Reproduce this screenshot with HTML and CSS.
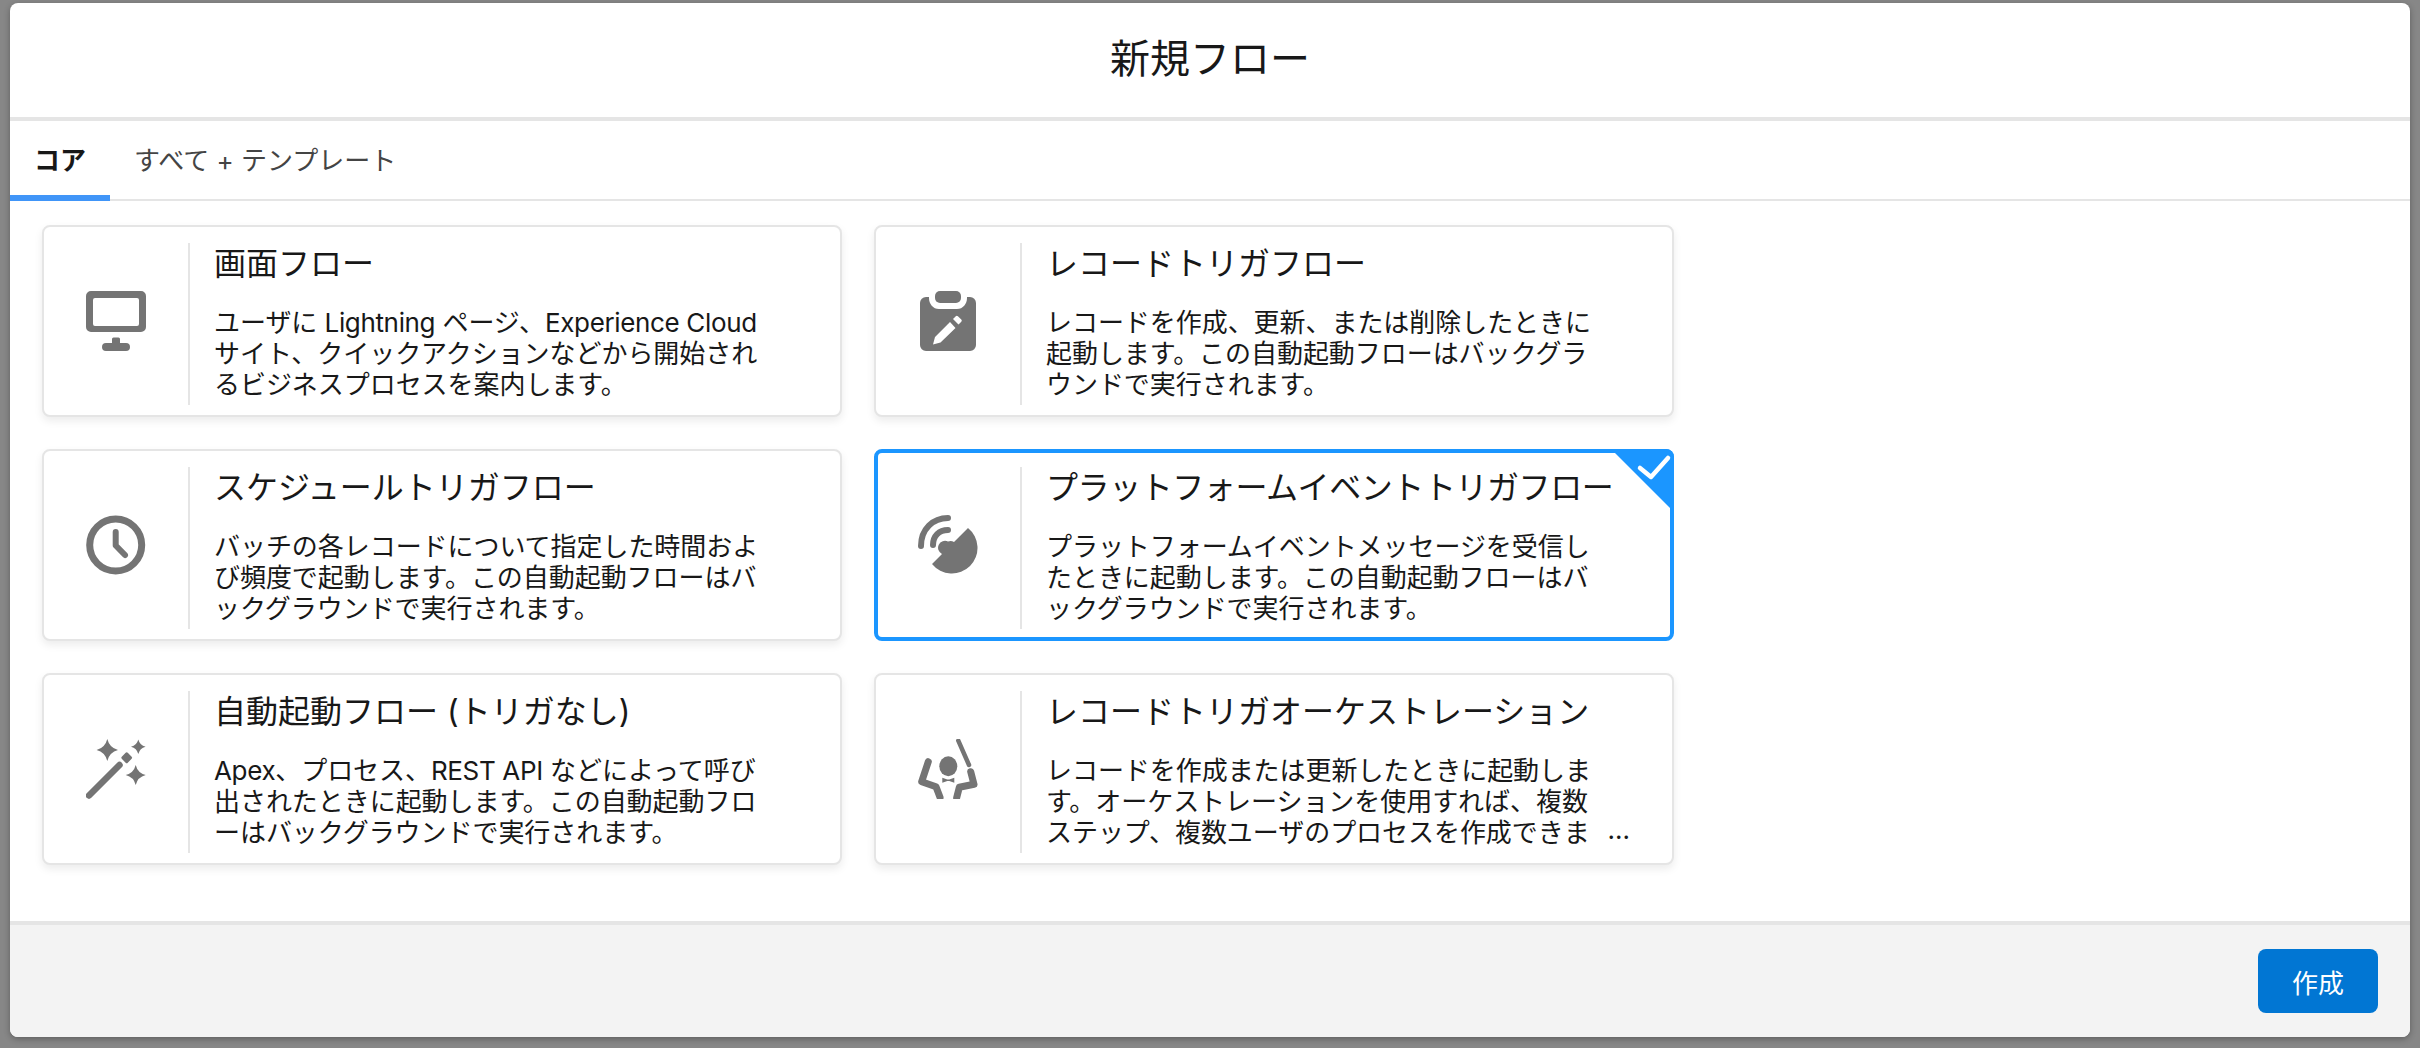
FILE: index.html
```html
<!DOCTYPE html>
<html lang="ja">
<head>
<meta charset="utf-8">
<title>新規フロー</title>
<link rel="stylesheet" href="styles.css">
</head>
<body>
<div class="modal">
  <header class="modal-header"><h1 class="modal-title">新規フロー</h1></header>
  <nav class="tabs">
    <a class="tab tab-active">コア</a>
    <a class="tab">すべて + テンプレート</a>
  </nav>
  <main class="modal-body">
    <div class="card-grid">
      <article class="card">
        <div class="card-icon">
          <svg class="icon" viewBox="0 0 60 60"><path fill-rule="evenodd" d="M5 0h50a5 5 0 0 1 5 5v31a5 5 0 0 1-5 5H5a5 5 0 0 1-5-5V5a5 5 0 0 1 5-5zM9 7a2 2 0 0 0-2 2v24a2 2 0 0 0 2 2h42a2 2 0 0 0 2-2V9a2 2 0 0 0-2-2z"/><path d="M26 48a1.500 1.500 0 0 1 1.500-1.500h5A1.500 1.500 0 0 1 34 48v4h6a4 4 0 0 1 0 8H20a4 4 0 0 1 0-8h6z"/></svg>
        </div>
        <div class="card-text">
          <h2 class="card-title">画面フロー</h2>
          <p class="card-desc">ユーザに <span class="latin">Lightning</span> ページ、<span class="latin">Experience Cloud</span><br>サイト、クイックアクションなどから開始され<br>るビジネスプロセスを案内します。</p>
        </div>
      </article>
      <article class="card">
        <div class="card-icon">
          <svg class="icon" viewBox="0 0 60 60"><rect x="17" y="0" width="26" height="12" rx="5"/><path fill-rule="evenodd" d="M8 6h3v1c0 6 4 11 10 11h18c6 0 10-5 10-11V6h3a6 6 0 0 1 6 6v42a6 6 0 0 1-6 6H8a6 6 0 0 1-6-6V12a6 6 0 0 1 6-6zM32 31 17 46l-2 7.500 7.500-2L37.500 37zM35 28l5.500 5.500 2.800-2.800a1.500 1.500 0 0 0 0-2.100l-3.400-3.400a1.500 1.500 0 0 0-2.100 0z"/></svg>
        </div>
        <div class="card-text">
          <h2 class="card-title">レコードトリガフロー</h2>
          <p class="card-desc">レコードを作成、更新、または削除したときに<br>起動します。この自動起動フローはバックグラ<br>ウンドで実行されます。</p>
        </div>
      </article>
      <article class="card">
        <div class="card-icon">
          <svg class="icon icon-line" viewBox="0 0 60 60"><circle cx="29.700" cy="30" r="26" stroke-width="7"/><path d="M29.700 17v13.500L39 40" stroke-width="6"/></svg>
        </div>
        <div class="card-text">
          <h2 class="card-title">スケジュールトリガフロー</h2>
          <p class="card-desc">バッチの各レコードについて指定した時間およ<br>び頻度で起動します。この自動起動フローはバ<br>ックグラウンドで実行されます。</p>
        </div>
      </article>
      <article class="card card-selected">
        <div class="card-icon">
          <svg class="icon" viewBox="0 0 60 60"><path d="M50 13A25.600 25.600 0 1 1 14 49L24 39a6.500 6.500 0 0 1 6-12.500a6.500 6.500 0 0 1 6 .5z"/><path class="stroke-only" d="M3 31C3 14 15 3 30 3" stroke-width="6"/><path class="stroke-only" d="M15 30C15 21 21 15 30 15" stroke-width="6"/></svg>
        </div>
        <div class="card-text">
          <h2 class="card-title">プラットフォームイベントトリガフロー</h2>
          <p class="card-desc">プラットフォームイベントメッセージを受信し<br>たときに起動します。この自動起動フローはバ<br>ックグラウンドで実行されます。</p>
        </div>
        <svg class="card-check" viewBox="0 0 63 63"><path class="check-bg" d="M0 0h55a8 8 0 0 1 8 8v55z"/><path class="check-mark" d="M29 19l11 9 17-19"/></svg>
      </article>
      <article class="card">
        <div class="card-icon">
          <svg class="icon" viewBox="0 0 60 60"><path class="stroke-only" d="M3 56.500 33.500 26" stroke-width="6.500"/><rect x="36.500" y="14.500" width="8.500" height="8.500" rx="1.500" transform="rotate(45 40.700 18.700)"/><path d="M21.300 0Q23.500 8.800 32 11Q23.500 13.200 21.300 22Q19.100 13.200 10.600 11Q19.100 8.800 21.300 0z"/><path d="M52.300 .4Q53.800 6.200 59.600 7.700Q53.800 9.200 52.300 15Q50.800 9.200 45 7.700Q50.800 6.200 52.300 .4z"/><path d="M49.700 26Q51.700 34 59.700 36Q51.700 38 49.700 46Q47.700 38 39.700 36Q47.700 34 49.700 26z"/></svg>
        </div>
        <div class="card-text">
          <h2 class="card-title">自動起動フロー (トリガなし)</h2>
          <p class="card-desc"><span class="latin">Apex</span>、プロセス、<span class="latin">REST API</span> などによって呼び<br>出されたときに起動します。この自動起動フロ<br>ーはバックグラウンドで実行されます。</p>
        </div>
      </article>
      <article class="card">
        <div class="card-icon">
          <svg class="icon" viewBox="0 0 60 60"><path class="stroke-only" d="M40.300 1.700 51 26" stroke-width="4.500"/><ellipse cx="30.300" cy="27.300" rx="9" ry="10"/><path d="M24.300 38.800l5 1.800h2l5-1.800v5l-5-1.800h-2l-5 1.800z"/><path class="stroke-only" d="M10.300 22.700 3.700 42.700 18 47.700 22 58.300" stroke-width="7"/><path class="stroke-only" d="M52.700 32.700 56 45.300 41.300 48.300 38.700 58.700" stroke-width="7"/></svg>
        </div>
        <div class="card-text">
          <h2 class="card-title">レコードトリガオーケストレーション</h2>
          <p class="card-desc">レコードを作成または更新したときに起動しま<br>す。オーケストレーションを使用すれば、複数<br>ステップ、複数ユーザのプロセスを作成できま</p>
        </div>
        <span class="card-more">...</span>
      </article>
    </div>
  </main>
  <footer class="modal-footer"><button class="btn-primary" type="button">作成</button></footer>
</div>
</body>
</html>
```
FILE: styles.css
```css
* { box-sizing: border-box; }
html, body { margin: 0; height: 100%; }
body {
  height: 1048px;
  padding: 3px 10px 11px;
  background: #878787;
  overflow: hidden;
  font-family: Inter, "Noto Sans CJK JP", sans-serif;
  color: #181818;
}
.modal {
  height: 1034px;
  display: flex;
  flex-direction: column;
  background: #fff;
  border-radius: 8px;
  overflow: hidden;
  box-shadow: 0 2px 6px rgba(0, 0, 0, .3);
}
.modal-header {
  height: 118px;
  flex: none;
  display: flex;
  align-items: center;
  justify-content: center;
  padding-bottom: 2px;
  border-bottom: 4px solid #e5e5e5;
}
.modal-title {
  margin: 0;
  font-size: 40px;
  font-weight: 400;
  line-height: 50px;
}
.tabs {
  height: 80px;
  flex: none;
  display: flex;
  border-bottom: 2px solid #e5e5e5;
}
.tab {
  height: 80px;
  padding: 0 24px;
  font-size: 26px;
  line-height: 80px;
  white-space: nowrap;
  color: #444;
}
.tab-active {
  width: 100px;
  color: #181818;
  font-weight: 700;
  border-bottom: 6px solid #4095f8;
}
.modal-body {
  flex: 1;
  padding: 24px 32px;
}
.card-grid {
  display: grid;
  grid-template-columns: 800px 800px;
  grid-auto-rows: 192px;
  gap: 32px;
}
.card {
  position: relative;
  display: flex;
  padding: 16px 0 10px;
  background: #fff;
  border: 2px solid #e5e5e5;
  border-radius: 8px;
  box-shadow: 0 4px 8px rgba(0, 0, 0, .08);
}
.card-selected {
  padding: 14px 0 8px;
  border: 4px solid #1b96ff;
  box-shadow: none;
}
.card-selected .card-icon { margin-left: -2px; }
.card-selected .card-title { letter-spacing: -.43px; }
.card-icon {
  width: 146px;
  flex: none;
  display: flex;
  align-items: center;
  justify-content: center;
  padding-bottom: 6px;
  border-right: 2px solid #e5e5e5;
}
.icon { width: 60px; height: 60px; fill: #747474; }
.icon-line { fill: none; stroke: #747474; stroke-linecap: round; stroke-linejoin: round; }
.stroke-only { fill: none; stroke: #747474; stroke-linecap: round; stroke-linejoin: round; }
.card-text { padding-left: 24px; min-width: 0; }
.card-title {
  margin: 1px 0 0;
  font-size: 32px;
  font-weight: 400;
  line-height: 40px;
  white-space: nowrap;
}
.card-desc {
  margin: 23px 0 0;
  font-size: 26px;
  line-height: 31px;
  letter-spacing: -.05px;
  white-space: nowrap;
}
.latin { letter-spacing: -.35px; }
.card-check {
  position: absolute;
  top: -4px;
  right: -4px;
  width: 63px;
  height: 63px;
}
.check-bg { fill: #1b96ff; }
.check-mark { fill: none; stroke: #fff; stroke-width: 4.500; stroke-linecap: round; stroke-linejoin: round; }
.card-more {
  position: absolute;
  right: 42px;
  bottom: 18px;
  font-size: 26px;
  line-height: 31px;
}
.modal-footer {
  height: 116px;
  flex: none;
  display: flex;
  align-items: flex-start;
  justify-content: flex-end;
  padding: 24px 32px 0 0;
  background: #f3f3f3;
  border-top: 4px solid #e5e5e5;
}
.btn-primary {
  width: 120px;
  height: 64px;
  border: 0;
  border-radius: 8px;
  background: #0176d3;
  color: #fff;
  font: inherit;
  font-size: 26px;
}
```
